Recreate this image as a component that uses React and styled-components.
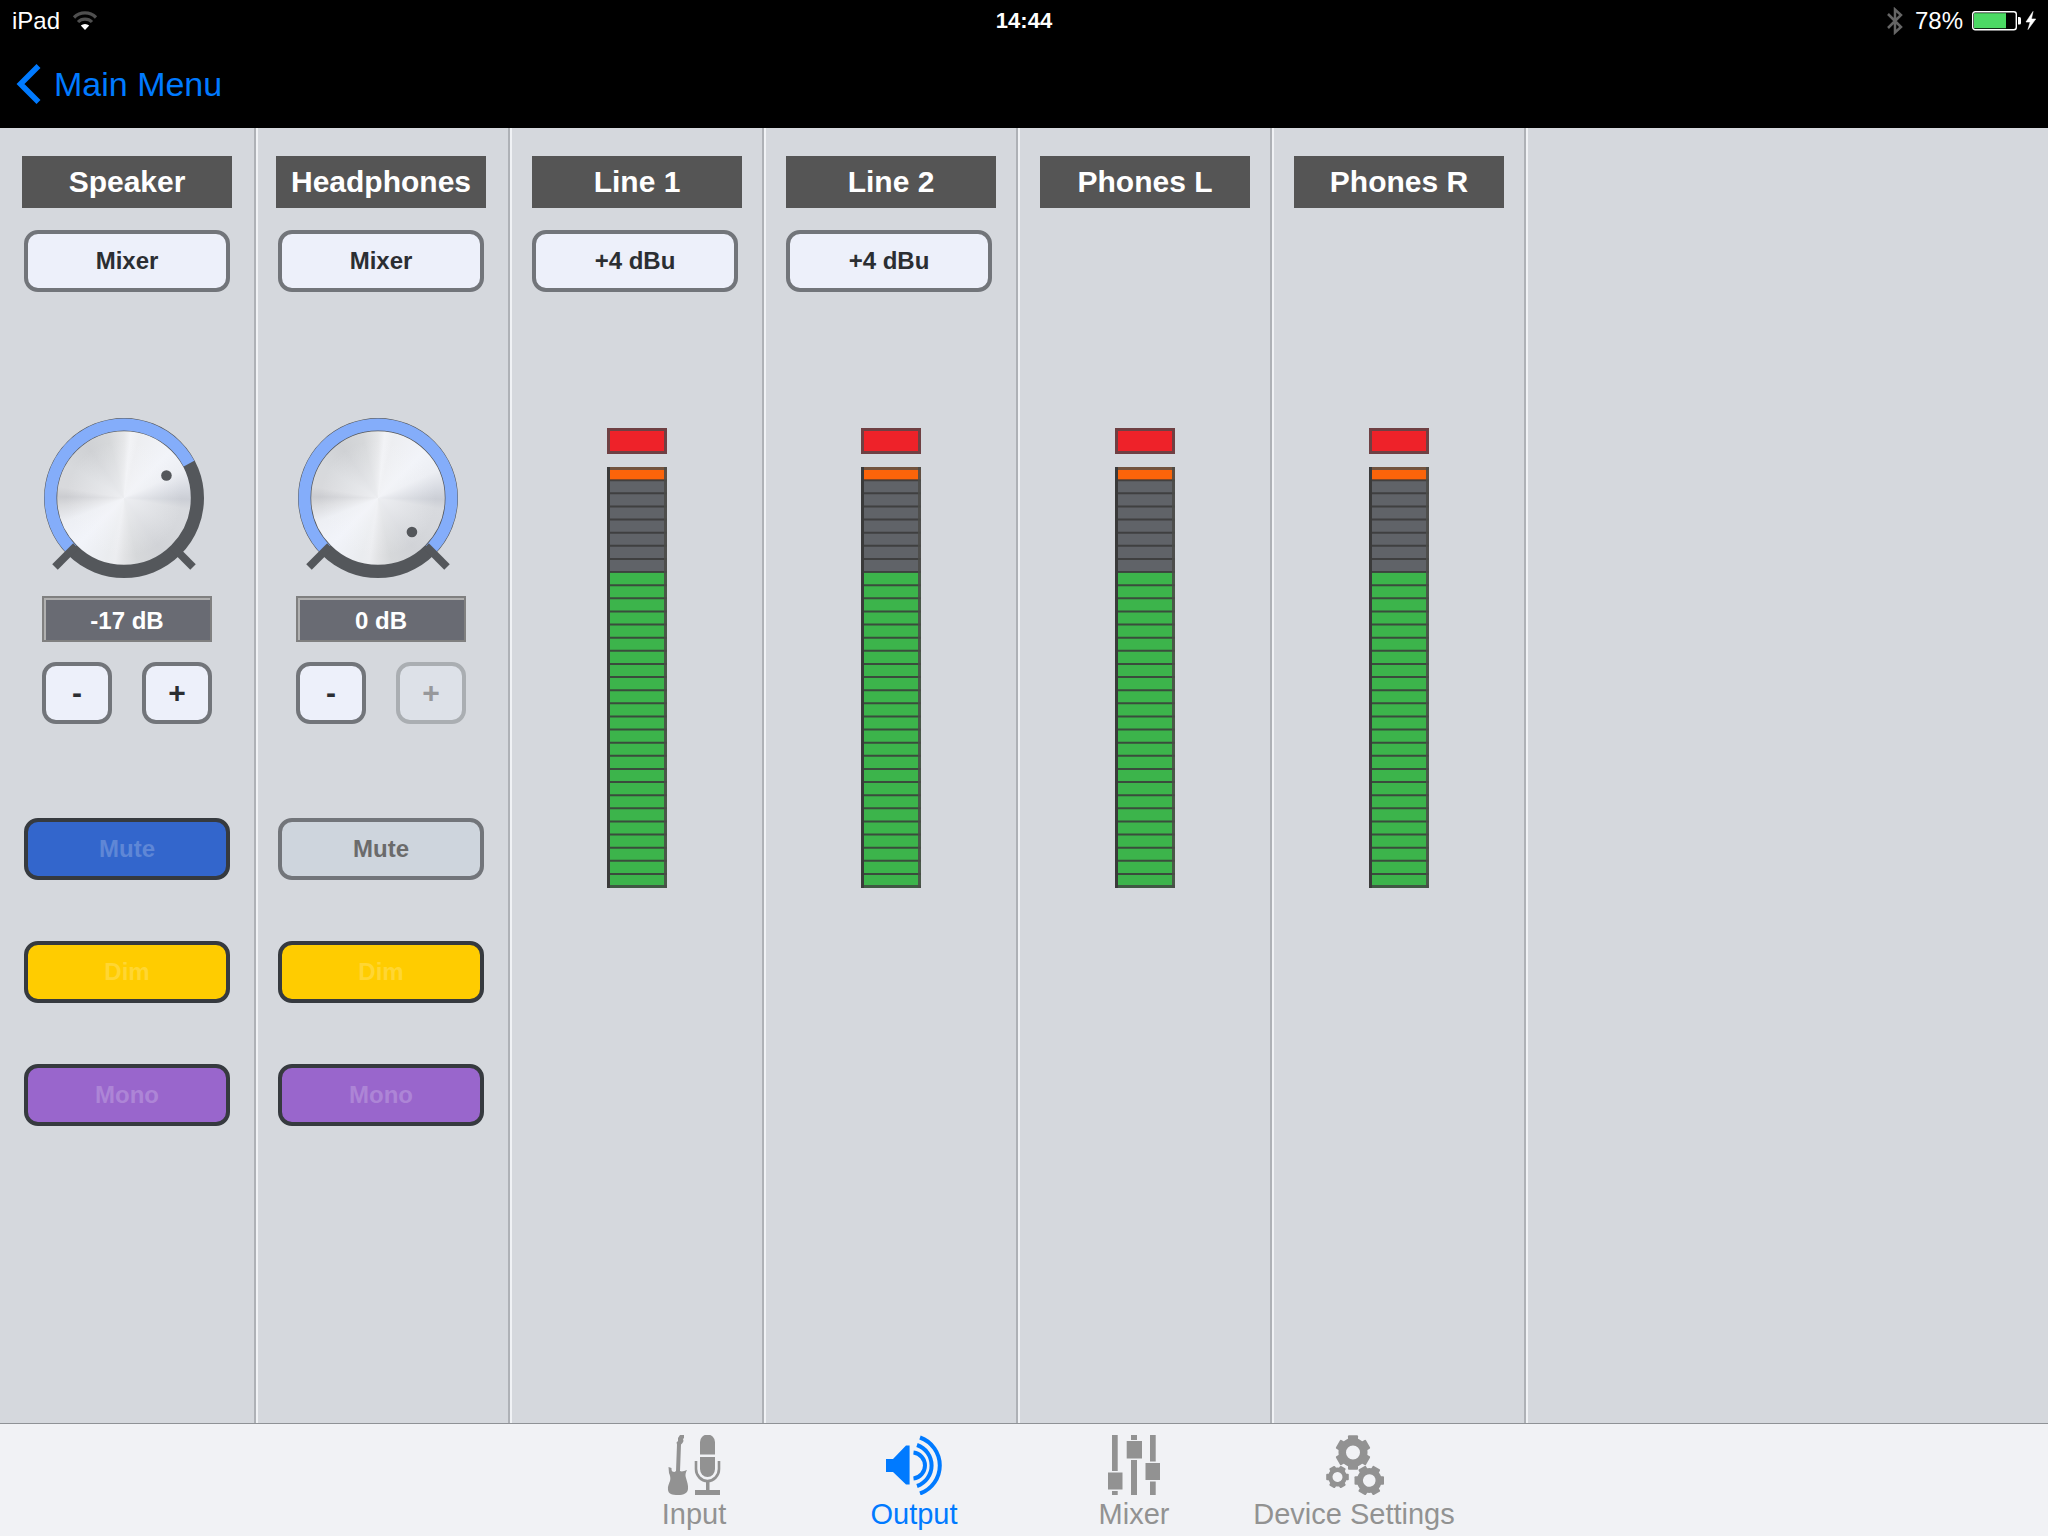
import React, { useState } from 'react';
import styled, { createGlobalStyle } from 'styled-components';

const MIN_DB = -63;
const MAX_DB = 0;
const SEGMENTS = 32;
const SEGMENT_HEIGHT = 13.125;

const monitorChannels = [
  { name: 'Speaker', source: 'Mixer', level: -17, mute: true, dim: true, mono: true },
  { name: 'Headphones', source: 'Mixer', level: 0, mute: false, dim: true, mono: true }
];

const outputChannels = [
  { name: 'Line 1', reference: '+4 dBu', lit: 24 },
  { name: 'Line 2', reference: '+4 dBu', lit: 24 },
  { name: 'Phones L', lit: 24 },
  { name: 'Phones R', lit: 24 }
];

// Point on the knob at a given radius, angle in degrees clockwise from 3 o'clock
const polar = (radius, degrees) => {
  const rad = (degrees * Math.PI) / 180;
  return [82 + radius * Math.cos(rad), 80 + radius * Math.sin(rad)];
};

const Knob = ({ label, value, onChange }) => {
  const sweep = ((value - MIN_DB) / (MAX_DB - MIN_DB)) * 270;
  const [startX, startY] = polar(73.5, 135);
  const [endX, endY] = polar(73.5, 135 + sweep);
  const [dotX, dotY] = polar(48, 135 + sweep);
  const ticks = [45, 135].map(angle => [...polar(68, angle), ...polar(97.6, angle)]);

  return (
    <KnobBox>
      <KnobFace />
      <KnobRing viewBox="0 0 164 160" aria-hidden="true">
        <circle cx="82" cy="80" r="73.4" fill="none" stroke="#54575b" strokeWidth="13.2" />
        <path
          d={`M${startX} ${startY}A73.5 73.5 0 ${sweep > 180 ? 1 : 0} 1 ${endX} ${endY}`}
          fill="none"
          stroke="#84adfa"
          strokeWidth="12"
        />
        {ticks.map(([x1, y1, x2, y2]) => (
          <line key={x1} x1={x1} y1={y1} x2={x2} y2={y2} stroke="#54575b" strokeWidth="7.8" />
        ))}
        <circle cx={dotX} cy={dotY} r="5.3" fill="#54575b" />
      </KnobRing>
      <KnobInput
        type="range"
        aria-label={label}
        min={MIN_DB}
        max={MAX_DB}
        value={value}
        onChange={onChange}
      />
    </KnobBox>
  );
};

const MonitorStrip = ({ channel }) => {
  const [level, setLevel] = useState(channel.level);
  const [mute, setMute] = useState(channel.mute);
  const [dim, setDim] = useState(channel.dim);
  const [mono, setMono] = useState(channel.mono);

  return (
    <Strip>
      <StripTitle>{channel.name}</StripTitle>
      <SourceSlot>
        <SourceButton type="button">{channel.source}</SourceButton>
      </SourceSlot>

      <LevelControl>
        <Knob
          label={`${channel.name} level`}
          value={level}
          onChange={(e) => setLevel(Number(e.target.value))}
        />
        <LevelValue>{level} dB</LevelValue>
        <StepRow>
          <StepButton
            type="button"
            aria-label={`${channel.name} down`}
            disabled={level <= MIN_DB}
            onClick={() => setLevel(level - 1)}
          >
            -
          </StepButton>
          <StepButton
            type="button"
            aria-label={`${channel.name} up`}
            disabled={level >= MAX_DB}
            onClick={() => setLevel(level + 1)}
          >
            +
          </StepButton>
        </StepRow>
      </LevelControl>

      <ToggleGroup>
        <Toggle type="button" $on={mute} $fill="#3366cc" $ink="#5f87d6" aria-pressed={mute} onClick={() => setMute(!mute)}>
          Mute
        </Toggle>
        <Toggle type="button" $on={dim} $fill="#ffcc00" $ink="#ffd633" aria-pressed={dim} onClick={() => setDim(!dim)}>
          Dim
        </Toggle>
        <Toggle type="button" $on={mono} $fill="#9966cc" $ink="#ad85d6" aria-pressed={mono} onClick={() => setMono(!mono)}>
          Mono
        </Toggle>
      </ToggleGroup>
    </Strip>
  );
};

const segmentColor = (index, lit) => {
  if (index === 0) return '#fb640a';
  return index >= SEGMENTS - lit ? '#3cb44b' : '#606368';
};

const LevelMeter = ({ label, lit }) => (
  <MeterBox role="meter" aria-label={label} aria-valuemin={0} aria-valuemax={SEGMENTS} aria-valuenow={lit}>
    <svg width="60" height="26" aria-hidden="true">
      <rect width="60" height="26" fill="#6f4043" />
      <rect x="3" y="3" width="54" height="20" fill="#ee2229" />
    </svg>
    <svg width="60" height="421" aria-hidden="true">
      {Array.from({ length: SEGMENTS }, (_, i) => (
        <rect key={i} y={i * SEGMENT_HEIGHT} width="60" height={SEGMENT_HEIGHT + 1} fill={segmentColor(i, lit)} />
      ))}
      {Array.from({ length: SEGMENTS - 1 }, (_, i) => (
        <line
          key={i}
          x1="3"
          x2="60"
          y1={(i + 1) * SEGMENT_HEIGHT}
          y2={(i + 1) * SEGMENT_HEIGHT}
          stroke="#3a3a3a"
          strokeOpacity="0.85"
          strokeWidth="2"
        />
      ))}
      <rect width="60" height="3" fill="#5a5048" fillOpacity="0.85" />
      <rect y="418" width="60" height="3" fill="#3f4f42" fillOpacity="0.9" />
      <rect x="57" width="3" height="421" fill="#4b4b48" fillOpacity="0.88" />
      <rect width="3" height="421" fill="#3a3a3a" />
    </svg>
  </MeterBox>
);

const OutputStrip = ({ channel }) => (
  <Strip $inset={20}>
    <StripTitle>{channel.name}</StripTitle>
    <SourceSlot $align="flex-start">
      {channel.reference && <SourceButton type="button">{channel.reference}</SourceButton>}
    </SourceSlot>
    <LevelMeter label={`${channel.name} meter`} lit={channel.lit} />
  </Strip>
);

const InputIcon = () => (
  <TabIcon viewBox="0 0 60 60" aria-hidden="true">
    <path d="M16 0h4v3l-1 1 .5 2-1 2-1.500 1.500L16 36c2 1 4 0 7-1-1.500 3-2 5-1 8 1 4 2.500 7 2 11-.5 4-4 6-10 6S4.500 59 4 55c-.5-4 1-6 2-9 .8-3 .2-5-1-8l-.5-6 3 1c-.3 3 1 4 3 4l1.500-1 1-26.500-.5-2 1.500-1.500V3z" />
    <path d="M36 19.500V7a7 7 0 0 1 15 0v12.500z" />
    <path d="M36 22h15v12a7.500 8 0 0 1-15 0z" />
    <path d="M32 26v8a11.500 12 0 0 0 23 0v-8" fill="none" stroke="currentColor" strokeWidth="2.600" />
    <path d="M42 46h3.500v9H56v5H31v-5h11z" />
  </TabIcon>
);

const OutputIcon = () => (
  <TabIcon viewBox="0 0 60 60" aria-hidden="true">
    <path d="M2 24h7l13-13.500h3.600v39H22L9 37H2z" />
    <g fill="none" stroke="currentColor" strokeWidth="4">
      <path d="M29.500 17.500A13.100 13.100 0 0 1 29.500 43.500" />
      <path d="M33 10A21.700 21.700 0 0 1 33 51" />
      <path d="M36 2.500A29.700 29.700 0 0 1 36 58.500" />
    </g>
  </TabIcon>
);

const MixerIcon = () => (
  <TabIcon viewBox="0 0 60 60" aria-hidden="true">
    <path d="M8 0h5.700v36H8zM8 56h5.700v4H8zM27 0h6v5h-6zM27 25h6v35h-6zM46 0h5.700v26.500H46zM46 46.500h5.700V60H46z" />
    <path d="M4 37.500h14.500v17H4zM22.700 6H38v17.500H22.700zM41.500 28H56v17H41.500z" />
  </TabIcon>
);

const Gear = ({ cx, cy, r, hole, turn = 0 }) => (
  <g transform={`translate(${cx} ${cy}) rotate(${turn})`}>
    <circle r={(r * 0.84 + hole) / 2} fill="none" stroke="currentColor" strokeWidth={r * 0.84 - hole} />
    {[0, 60, 120, 180, 240, 300].map(angle => (
      <rect
        key={angle}
        x={-r * 0.29}
        y={-r}
        width={r * 0.58}
        height={r * 0.4}
        rx="1"
        transform={`rotate(${angle})`}
      />
    ))}
  </g>
);

const SettingsIcon = () => (
  <TabIcon viewBox="0 0 60 60" aria-hidden="true">
    <Gear cx={29} cy={17.5} r={17.3} hole={7} />
    <Gear cx={13.5} cy={42} r={11.3} hole={5} turn={30} />
    <Gear cx={45.3} cy={45.5} r={14.8} hole={6.3} turn={30} />
  </TabIcon>
);

const tabs = [
  { label: 'Input', Icon: InputIcon },
  { label: 'Output', Icon: OutputIcon },
  { label: 'Mixer', Icon: MixerIcon },
  { label: 'Device Settings', Icon: SettingsIcon }
];

const App = () => {
  const [activeTab, setActiveTab] = useState('Output');

  return (
    <>
      <GlobalStyle />
      <Page>
        <StatusBar>
          <StatusGroup>
            <span>iPad</span>
            <svg width="26" height="20" viewBox="0 0 26 20" fill="none" aria-hidden="true">
              <path d="M2 6.500a15.500 15.500 0 0 1 22 0" stroke="#4f4f4f" strokeWidth="3.200" />
              <path d="M6 11a9.800 9.800 0 0 1 14 0" stroke="#4f4f4f" strokeWidth="3.200" />
              <path d="M13 19l-4.200-4.500a6.300 6.300 0 0 1 8.400 0z" fill="#fff" />
            </svg>
          </StatusGroup>
          <Clock>14:44</Clock>
          <StatusGroup $end>
            <svg width="16" height="28" viewBox="0 0 16 28" fill="none" stroke="#666" strokeWidth="2.500" aria-hidden="true">
              <path d="M1 7l13 13-6 5.500v-23L14 8 1 21" />
            </svg>
            <BatteryText>78%</BatteryText>
            <svg width="64" height="20" viewBox="0 0 64 20" aria-hidden="true">
              <rect x="0.700" y="0.700" width="43.600" height="18" rx="2.500" fill="none" stroke="#fff" strokeWidth="1.400" />
              <rect x="2" y="2.200" width="32" height="15" fill="#4cd964" />
              <path d="M46 6h1.500q1.500 0 1.500 1.500v4.500q0 1.500-1.500 1.500H46z" fill="#fff" />
              <path d="M61 .5L54 11h4.200L56 18.500 63.700 8h-4.300z" fill="#fff" stroke="#fff" strokeWidth=".6" />
            </svg>
          </StatusGroup>
        </StatusBar>

        <NavBar>
          <BackLink href="#main-menu">
            <svg width="25" height="40" viewBox="0 0 25 40" fill="none" aria-hidden="true">
              <path d="M22.500 2L4.500 20l18 18" stroke="currentColor" strokeWidth="5.600" />
            </svg>
            Main Menu
          </BackLink>
        </NavBar>

        <Board>
          {monitorChannels.map(channel => (
            <MonitorStrip key={channel.name} channel={channel} />
          ))}
          {outputChannels.map(channel => (
            <OutputStrip key={channel.name} channel={channel} />
          ))}
          <EmptyStrip />
        </Board>

        <TabBar>
          {tabs.map(({ label, Icon }) => (
            <Tab
              key={label}
              type="button"
              $active={label === activeTab}
              aria-current={label === activeTab ? 'page' : undefined}
              onClick={() => setActiveTab(label)}
            >
              <Icon />
              <TabLabel>{label}</TabLabel>
            </Tab>
          ))}
        </TabBar>
      </Page>
    </>
  );
};

const GlobalStyle = createGlobalStyle`
  * {
    box-sizing: border-box;
  }

  body {
    margin: 0;
    background-color: #d5d8dd;
    font-family: "Liberation Sans", Arial, sans-serif;
  }

  button {
    font-family: inherit;
    cursor: pointer;
  }
`;

const Page = styled.div`
  display: flex;
  flex-direction: column;
  min-height: 100vh;
`;

const StatusBar = styled.header`
  display: grid;
  grid-template-columns: 1fr auto 1fr;
  align-items: center;
  height: 42px;
  padding: 0 12px;
  background-color: #000;
  color: #fff;
  font-size: 24px;
`;

const StatusGroup = styled.div`
  display: flex;
  align-items: center;
  justify-content: ${props => (props.$end ? 'flex-end' : 'flex-start')};
  gap: 12px;
`;

const Clock = styled.time`
  font-size: 22px;
  font-weight: 700;
`;

const BatteryText = styled.span`
  margin-right: -3px;
`;

const NavBar = styled.nav`
  display: flex;
  align-items: center;
  height: 86px;
  padding: 0 16px 2px;
  background-color: #000;
`;

const BackLink = styled.a`
  display: flex;
  align-items: center;
  gap: 13px;
  color: #007aff;
  font-size: 34px;
  text-decoration: none;
`;

const Board = styled.main`
  flex: 1;
  display: grid;
  grid-template-columns: repeat(6, 254px) 1fr;
  padding-left: 2px;
`;

const Strip = styled.section`
  display: flex;
  flex-direction: column;
  padding: 28px 0 40px ${props => props.$inset || 18}px;
  border-left: 2px solid #f0f2f5;
  border-right: 2px solid #aeb1b6;

  &:first-child {
    border-left-color: transparent;
  }

  & > * {
    width: 210px;
  }
`;

const EmptyStrip = styled.div`
  border-left: 2px solid #f0f2f5;
`;

const StripTitle = styled.h2`
  margin: 0;
  background-color: #555;
  color: #fff;
  font-size: 30px;
  font-weight: 700;
  line-height: 52px;
  text-align: center;
`;

const SourceSlot = styled.div`
  display: flex;
  justify-content: ${props => props.$align || 'center'};
  height: 62px;
  margin-top: 22px;
`;

const PanelButton = styled.button`
  height: 62px;
  padding: 0;
  border: 4px solid #72757a;
  border-radius: 14px;
  background-color: #edf0fa;
  color: #2b2e32;
  font-size: 24px;
  font-weight: 700;
`;

const SourceButton = styled(PanelButton)`
  width: 206px;
`;

const LevelControl = styled.div`
  display: flex;
  flex-direction: column;
  margin-top: 126px;
  padding: 0 20px;
`;

const KnobBox = styled.div`
  display: grid;
  place-items: center;
  width: 164px;
  height: 160px;

  & > * {
    grid-area: 1 / 1;
  }
`;

const KnobFace = styled.div`
  width: 136px;
  height: 136px;
  border-radius: 50%;
  background:
    radial-gradient(circle, rgba(243, 244, 247, 0.8) 0, rgba(243, 244, 247, 0) 60%),
    conic-gradient(
      #e6e7e9 0deg,
      #f2f3f6 6deg,
      #edeef1 14deg,
      #f2f4f9 45deg,
      #eceef3 65deg,
      #d6d9e0 82deg,
      #cbced5 91deg,
      #d8dade 100deg,
      #d6d8dc 120deg,
      #d1d3d7 145deg,
      #d6d8da 168deg,
      #e2e3e5 180deg,
      #ecedf0 188deg,
      #eaecef 196deg,
      #f2f4fa 225deg,
      #edeff4 248deg,
      #dadbde 263deg,
      #cbccd0 271deg,
      #d8d9dc 280deg,
      #d7d9dc 300deg,
      #cfd1d4 325deg,
      #d6d8da 346deg,
      #e6e7e9 360deg
    );
`;

const KnobRing = styled.svg`
  width: 164px;
  height: 160px;
`;

const KnobInput = styled.input`
  width: 100%;
  height: 100%;
  margin: 0;
  opacity: 0;
  cursor: pointer;
`;

const LevelValue = styled.output`
  height: 46px;
  margin-top: 18px;
  padding-top: 3px;
  border: 2px solid #808080;
  background-color: #696b73;
  box-shadow: inset 2px 2px 0 #b0b0b0;
  color: #fff;
  font-size: 24px;
  font-weight: 700;
  line-height: 40px;
  text-align: center;
`;

const StepRow = styled.div`
  display: flex;
  justify-content: space-between;
  margin-top: 20px;
`;

const StepButton = styled(PanelButton)`
  width: 70px;
  font-size: 30px;

  &:disabled {
    border-color: #aaaeb2;
    background-color: #dde1e8;
    color: #97989b;
    cursor: default;
  }
`;

const ToggleGroup = styled.div`
  display: flex;
  flex-direction: column;
  align-items: center;
  gap: 61px;
  margin-top: 94px;
`;

const Toggle = styled(PanelButton)`
  width: 206px;
  border-color: ${props => (props.$on ? '#363a3f' : '#72757a')};
  background-color: ${props => (props.$on ? props.$fill : '#ced5dd')};
  color: ${props => (props.$on ? props.$ink : '#6b6b6b')};
`;

const MeterBox = styled.div`
  display: flex;
  flex-direction: column;
  align-items: center;
  gap: 13px;
  margin-top: 136px;
`;

const TabBar = styled.nav`
  display: flex;
  justify-content: center;
  border-top: 1px solid #8f9296;
  background-color: #f1f2f5;
`;

const Tab = styled.button`
  display: flex;
  flex-direction: column;
  align-items: center;
  gap: 3px;
  width: 220px;
  padding: 11px 0 6px;
  border: none;
  background: none;
  color: ${props => (props.$active ? '#007aff' : '#929292')};
`;

const TabIcon = styled.svg`
  width: 60px;
  height: 60px;
  fill: currentColor;
`;

const TabLabel = styled.span`
  font-size: 29px;
  line-height: 32px;
  white-space: nowrap;
`;

export default App;
